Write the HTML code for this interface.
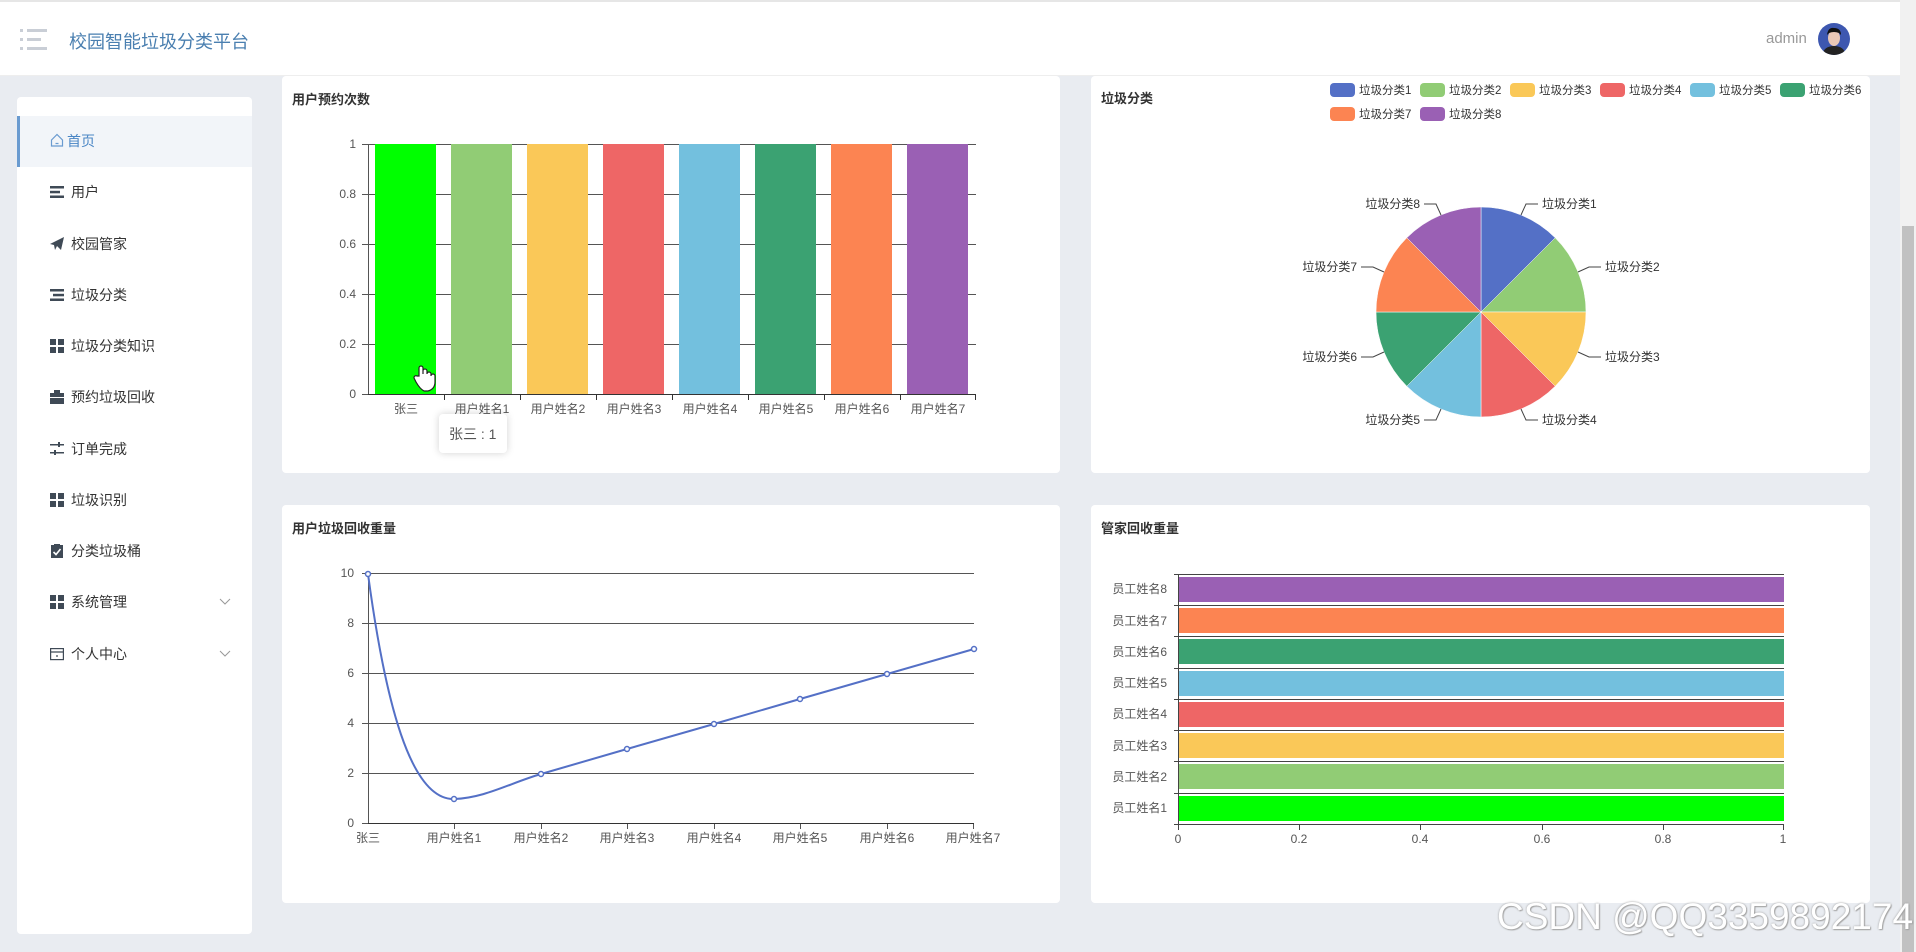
<!DOCTYPE html>
<html><head><meta charset="utf-8">
<style>
*{margin:0;padding:0;box-sizing:border-box}
body{width:1916px;height:952px;overflow:hidden;background:#e9ecf1;font-family:"Liberation Sans","Noto Sans CJK SC",sans-serif;position:relative}
.hdr{position:absolute;left:0;top:0;width:1900px;height:76px;background:#fff;border-top:2px solid #e6e6e6;border-bottom:1px solid #eee}
.title{position:absolute;left:69px;top:26px;font-size:18px;color:#4a7fb0}
.admin{position:absolute;left:1766px;top:28px;font-size:15px;color:#999}
.av{position:absolute;left:1818px;top:21px;width:32px;height:32px;border-radius:50%;background:#3d57b0;overflow:hidden}
.sb{position:absolute;left:1900px;top:0;width:16px;height:952px;background:#f1f1f1}
.thumb{position:absolute;left:1902px;top:226px;width:12px;height:726px;background:#c1c1c1}
.side{position:absolute;left:17px;top:97px;width:235px;height:837px;background:#fff;border-radius:4px}
.item{position:absolute;left:0;width:235px;height:51px;font-size:14px;color:#333}
.item .ic{position:absolute;left:33px;top:18px;width:14px;height:14px}
.item .tx{position:absolute;left:54px;top:15px}
.active{background:#f2f5f9;border-left:3px solid #6a9bd0}
.card{position:absolute;background:#fff;border-radius:4px}
.ct{position:absolute;left:10px;top:13px;font-size:13px;font-weight:bold;color:#333}
.tip{position:absolute;left:439px;top:414px;width:68px;height:39px;background:#fff;border-radius:4px;box-shadow:0 0 8px rgba(0,0,0,.18);font-size:14px;color:#555;padding:10px 0 0 10px}
.wm{position:absolute;left:1497px;top:896px;font-size:37px;color:#fff;text-shadow:0 0 2px #999,1px 1px 1px #aaa}
svg text{font-family:"Liberation Sans","Noto Sans CJK SC",sans-serif}
</style></head><body>
<div class="hdr">
<svg style="position:absolute;left:20px;top:26px" width="28" height="24"><g fill="#c9ced6"><rect x="0" y="1" width="3" height="3"/><rect x="7" y="1" width="20" height="3"/><rect x="0" y="10" width="3" height="3"/><rect x="7" y="10" width="14" height="3"/><rect x="0" y="19" width="3" height="3"/><rect x="7" y="19" width="20" height="3"/></g></svg>
<div class="title">校园智能垃圾分类平台</div>
<div class="admin">admin</div>
<div class="av"><svg width="32" height="32"><ellipse cx="16" cy="15" rx="6" ry="8" fill="#e9c7b6"/><path d="M9 12 Q10 4 16 5 Q23 5 23 12 L21 10 Q16 8 11 10Z" fill="#111"/><path d="M4 32 Q6 23 16 23 Q26 23 28 32Z" fill="#222"/></svg></div>
</div>
<div class="sb"></div><div class="thumb"></div>

<div class="side">
<div class="item active" style="top:19px"><svg class="ic" style="left:30px;top:17px" viewBox="0 0 14 14"><path d="M1.5 7 L7 1.5 L12.5 7 V13 H1.5Z M5.5 10.5 H8.5" fill="none" stroke="#6a9bd0" stroke-width="1.2"/></svg><span class="tx" style="left:47px;color:#4a86c5">首页</span></div>
<div class="item" style="top:70px"><svg class="ic" viewBox="0 0 14 14"><g fill="#3f4a56"><rect y="1" width="14" height="2.5"/><rect y="5.8" width="10" height="2.5"/><rect y="10.5" width="14" height="2.5"/></g></svg><span class="tx">用户</span></div>
<div class="item" style="top:122px"><svg class="ic" viewBox="0 0 14 14"><path d="M0 7 L14 0 L11 13 L7 9 L5 13 L4 8Z" fill="#3f4a56"/></svg><span class="tx">校园管家</span></div>
<div class="item" style="top:173px"><svg class="ic" viewBox="0 0 14 14"><g fill="#3f4a56"><rect y="1" width="14" height="2.5"/><rect x="3" y="5.8" width="11" height="2.5"/><rect y="10.5" width="14" height="2.5"/></g></svg><span class="tx">垃圾分类</span></div>
<div class="item" style="top:224px"><svg class="ic" viewBox="0 0 14 14"><g fill="#3f4a56"><rect width="6" height="6"/><rect x="8" width="6" height="6"/><rect y="8" width="6" height="6"/><rect x="8" y="8" width="6" height="6"/></g></svg><span class="tx">垃圾分类知识</span></div>
<div class="item" style="top:275px"><svg class="ic" viewBox="0 0 14 14"><g fill="#3f4a56"><rect x="4" y="0" width="6" height="3"/><rect y="3" width="14" height="4"/><rect y="8" width="14" height="6"/></g></svg><span class="tx">预约垃圾回收</span></div>
<div class="item" style="top:327px"><svg class="ic" viewBox="0 0 14 14"><g fill="#3f4a56"><rect y="2" width="14" height="1.5"/><rect x="8" y="0" width="2" height="5"/><rect y="10" width="14" height="1.5"/><rect x="4" y="8" width="2" height="5"/></g></svg><span class="tx">订单完成</span></div>
<div class="item" style="top:378px"><svg class="ic" viewBox="0 0 14 14"><g fill="#3f4a56"><rect width="6" height="6"/><rect x="8" width="6" height="6"/><rect y="8" width="6" height="6"/><rect x="8" y="8" width="6" height="6"/></g></svg><span class="tx">垃圾识别</span></div>
<div class="item" style="top:429px"><svg class="ic" viewBox="0 0 14 14"><rect x="1" y="1" width="12" height="13" fill="#3f4a56"/><rect x="4" y="0" width="6" height="3" fill="#3f4a56"/><path d="M3.5 8 L6 10.5 L10.5 5" stroke="#fff" stroke-width="1.6" fill="none"/></svg><span class="tx">分类垃圾桶</span></div>
<div class="item" style="top:480px"><svg class="ic" viewBox="0 0 14 14"><g fill="#3f4a56"><rect width="6" height="6"/><rect x="8" width="6" height="6"/><rect y="8" width="6" height="6"/><rect x="8" y="8" width="6" height="6"/></g></svg><span class="tx">系统管理</span><svg style="position:absolute;left:202px;top:21px" width="12" height="8"><path d="M1 1 L6 6 L11 1" stroke="#999" fill="none"/></svg></div>
<div class="item" style="top:532px"><svg class="ic" viewBox="0 0 14 14"><rect x="0.6" y="1.6" width="12.8" height="11" fill="none" stroke="#3f4a56" stroke-width="1.2"/><path d="M0.6 5 H13.4 M6 9 H8" stroke="#3f4a56" stroke-width="1.2"/></svg><span class="tx">个人中心</span><svg style="position:absolute;left:202px;top:21px" width="12" height="8"><path d="M1 1 L6 6 L11 1" stroke="#999" fill="none"/></svg></div>
</div>

<div class="card" style="left:282px;top:76px;width:778px;height:397px"><div class="ct">用户预约次数</div></div>
<div class="card" style="left:1091px;top:76px;width:779px;height:397px"><div class="ct" style="top:12px">垃圾分类</div></div>
<div class="card" style="left:282px;top:505px;width:778px;height:398px"><div class="ct">用户垃圾回收重量</div></div>
<div class="card" style="left:1091px;top:505px;width:779px;height:398px"><div class="ct">管家回收重量</div></div>

<svg style="position:absolute;left:0;top:0" width="1916" height="952">
<g stroke="#555" stroke-width="1">
<line x1="368" y1="144.5" x2="976" y2="144.5"/><line x1="368" y1="194.5" x2="976" y2="194.5"/><line x1="368" y1="244.5" x2="976" y2="244.5"/><line x1="368" y1="294.5" x2="976" y2="294.5"/><line x1="368" y1="344.5" x2="976" y2="344.5"/>
<line x1="362" y1="144.5" x2="368" y2="144.5"/><line x1="362" y1="194.5" x2="368" y2="194.5"/><line x1="362" y1="244.5" x2="368" y2="244.5"/><line x1="362" y1="294.5" x2="368" y2="294.5"/><line x1="362" y1="344.5" x2="368" y2="344.5"/><line x1="362" y1="394.5" x2="368" y2="394.5"/>
<line x1="368.5" y1="144" x2="368.5" y2="395"/>
</g>
<g>
<rect x="375" y="144" width="61" height="250" fill="#00ff00"/><rect x="451" y="144" width="61" height="250" fill="#91cc75"/><rect x="527" y="144" width="61" height="250" fill="#fac858"/><rect x="603" y="144" width="61" height="250" fill="#ee6666"/><rect x="679" y="144" width="61" height="250" fill="#73c0de"/><rect x="755" y="144" width="61" height="250" fill="#3ba272"/><rect x="831" y="144" width="61" height="250" fill="#fc8452"/><rect x="907" y="144" width="61" height="250" fill="#9a60b4"/>
</g>
<g stroke="#333"><line x1="368" y1="394.5" x2="976" y2="394.5"/><line x1="444.5" y1="395" x2="444.5" y2="400"/><line x1="520.5" y1="395" x2="520.5" y2="400"/><line x1="596.5" y1="395" x2="596.5" y2="400"/><line x1="672.5" y1="395" x2="672.5" y2="400"/><line x1="748.5" y1="395" x2="748.5" y2="400"/><line x1="824.5" y1="395" x2="824.5" y2="400"/><line x1="900.5" y1="395" x2="900.5" y2="400"/><line x1="975.5" y1="395" x2="975.5" y2="400"/></g>
<g font-size="12" fill="#555" text-anchor="end"><text x="356" y="148">1</text><text x="356" y="198">0.8</text><text x="356" y="248">0.6</text><text x="356" y="298">0.4</text><text x="356" y="348">0.2</text><text x="356" y="398">0</text></g>
<g font-size="12" fill="#555" text-anchor="middle"><text x="406" y="413">张三</text><text x="482" y="413">用户姓名1</text><text x="558" y="413">用户姓名2</text><text x="634" y="413">用户姓名3</text><text x="710" y="413">用户姓名4</text><text x="786" y="413">用户姓名5</text><text x="862" y="413">用户姓名6</text><text x="938" y="413">用户姓名7</text></g>
<path d="M419 376 v-8 a2 2 0 0 1 4 0 v6 v-3 a2 2 0 0 1 4 0 v3 a2 2 0 0 1 4 0 v2 a2 2 0 0 1 4 0 v6 q0 7 -7 9 h-4 q-4 -2 -8 -9 l-2 -4 a2 2 0 0 1 3 -2z" fill="#fff" stroke="#222" stroke-width="1.2"/>

<g stroke="#fff" stroke-width="0.5">
<path d="M1481 312 L1481 207 A105 105 0 0 1 1555.2 237.8Z" fill="#5470c6"/>
<path d="M1481 312 L1555.2 237.8 A105 105 0 0 1 1586 312Z" fill="#91cc75"/>
<path d="M1481 312 L1586 312 A105 105 0 0 1 1555.2 386.2Z" fill="#fac858"/>
<path d="M1481 312 L1555.2 386.2 A105 105 0 0 1 1481 417Z" fill="#ee6666"/>
<path d="M1481 312 L1481 417 A105 105 0 0 1 1406.8 386.2Z" fill="#73c0de"/>
<path d="M1481 312 L1406.8 386.2 A105 105 0 0 1 1376 312Z" fill="#3ba272"/>
<path d="M1481 312 L1376 312 A105 105 0 0 1 1406.8 237.8Z" fill="#fc8452"/>
<path d="M1481 312 L1406.8 237.8 A105 105 0 0 1 1481 207Z" fill="#9a60b4"/>
</g>
<g stroke="#444" fill="none" stroke-width="1">
<path d="M1521 215 L1526 204 H1538"/><path d="M1578 272 L1589 267 H1601"/><path d="M1578 352 L1589 357 H1601"/><path d="M1521 409 L1526 420 H1538"/>
<path d="M1441 409 L1436 420 H1424"/><path d="M1384 352 L1373 357 H1361"/><path d="M1384 272 L1373 267 H1361"/><path d="M1441 215 L1436 204 H1424"/>
</g>
<g font-size="12" fill="#333"><text x="1542" y="208">垃圾分类1</text><text x="1605" y="271">垃圾分类2</text><text x="1605" y="361">垃圾分类3</text><text x="1542" y="424">垃圾分类4</text></g>
<g font-size="12" fill="#333" text-anchor="end"><text x="1420" y="424">垃圾分类5</text><text x="1357" y="361">垃圾分类6</text><text x="1357" y="271">垃圾分类7</text><text x="1420" y="208">垃圾分类8</text></g>
<g font-size="11.5" fill="#333">
<rect x="1330" y="83" width="25" height="14" rx="4" fill="#5470c6"/><text x="1359" y="94">垃圾分类1</text>
<rect x="1420" y="83" width="25" height="14" rx="4" fill="#91cc75"/><text x="1449" y="94">垃圾分类2</text>
<rect x="1510" y="83" width="25" height="14" rx="4" fill="#fac858"/><text x="1539" y="94">垃圾分类3</text>
<rect x="1600" y="83" width="25" height="14" rx="4" fill="#ee6666"/><text x="1629" y="94">垃圾分类4</text>
<rect x="1690" y="83" width="25" height="14" rx="4" fill="#73c0de"/><text x="1719" y="94">垃圾分类5</text>
<rect x="1780" y="83" width="25" height="14" rx="4" fill="#3ba272"/><text x="1809" y="94">垃圾分类6</text>
<rect x="1330" y="107" width="25" height="14" rx="4" fill="#fc8452"/><text x="1359" y="118">垃圾分类7</text>
<rect x="1420" y="107" width="25" height="14" rx="4" fill="#9a60b4"/><text x="1449" y="118">垃圾分类8</text>
</g>

<g stroke="#555"><line x1="368" y1="573.5" x2="974" y2="573.5"/><line x1="368" y1="623.5" x2="974" y2="623.5"/><line x1="368" y1="673.5" x2="974" y2="673.5"/><line x1="368" y1="723.5" x2="974" y2="723.5"/><line x1="368" y1="773.5" x2="974" y2="773.5"/>
<line x1="362" y1="573.5" x2="368" y2="573.5"/><line x1="362" y1="623.5" x2="368" y2="623.5"/><line x1="362" y1="673.5" x2="368" y2="673.5"/><line x1="362" y1="723.5" x2="368" y2="723.5"/><line x1="362" y1="773.5" x2="368" y2="773.5"/><line x1="362" y1="823.5" x2="368" y2="823.5"/>
<line x1="368.5" y1="573" x2="368.5" y2="824"/><line x1="368" y1="823.5" x2="974" y2="823.5" stroke="#333"/>
<line x1="454.5" y1="824" x2="454.5" y2="829"/><line x1="541.5" y1="824" x2="541.5" y2="829"/><line x1="627.5" y1="824" x2="627.5" y2="829"/><line x1="714.5" y1="824" x2="714.5" y2="829"/><line x1="800.5" y1="824" x2="800.5" y2="829"/><line x1="887.5" y1="824" x2="887.5" y2="829"/><line x1="973.5" y1="824" x2="973.5" y2="829"/></g>
<g font-size="12" fill="#555" text-anchor="end"><text x="354" y="577">10</text><text x="354" y="627">8</text><text x="354" y="677">6</text><text x="354" y="727">4</text><text x="354" y="777">2</text><text x="354" y="827">0</text></g>
<g font-size="12" fill="#555" text-anchor="middle"><text x="368" y="842">张三</text><text x="454" y="842">用户姓名1</text><text x="541" y="842">用户姓名2</text><text x="627" y="842">用户姓名3</text><text x="714" y="842">用户姓名4</text><text x="800" y="842">用户姓名5</text><text x="887" y="842">用户姓名6</text><text x="973" y="842">用户姓名7</text></g>
<path d="M368 574 C385 700 410 800 454 799 C485 798 510 783 541 774 L627 749 L714 724 L800 699 L887 674 L974 649" fill="none" stroke="#5470c6" stroke-width="2"/>
<g fill="#fff" stroke="#5470c6" stroke-width="1.5"><circle cx="368" cy="574" r="2.5"/><circle cx="454" cy="799" r="2.5"/><circle cx="541" cy="774" r="2.5"/><circle cx="627" cy="749" r="2.5"/><circle cx="714" cy="724" r="2.5"/><circle cx="800" cy="699" r="2.5"/><circle cx="887" cy="674" r="2.5"/><circle cx="974" cy="649" r="2.5"/></g>

<g>
<rect x="1178" y="577" width="606" height="25" fill="#9a60b4"/>
<rect x="1178" y="608" width="606" height="25" fill="#fc8452"/>
<rect x="1178" y="639" width="606" height="25" fill="#3ba272"/>
<rect x="1178" y="671" width="606" height="25" fill="#73c0de"/>
<rect x="1178" y="702" width="606" height="25" fill="#ee6666"/>
<rect x="1178" y="733" width="606" height="25" fill="#fac858"/>
<rect x="1178" y="764" width="606" height="25" fill="#91cc75"/>
<rect x="1178" y="796" width="606" height="25" fill="#00ff00"/>
</g>
<g stroke="#444"><line x1="1174" y1="574.5" x2="1784" y2="574.5"/><line x1="1174" y1="605.5" x2="1784" y2="605.5"/><line x1="1174" y1="636.5" x2="1784" y2="636.5"/><line x1="1174" y1="668.5" x2="1784" y2="668.5"/><line x1="1174" y1="699.5" x2="1784" y2="699.5"/><line x1="1174" y1="730.5" x2="1784" y2="730.5"/><line x1="1174" y1="761.5" x2="1784" y2="761.5"/><line x1="1174" y1="793.5" x2="1784" y2="793.5"/><line x1="1174" y1="824.5" x2="1784" y2="824.5"/>
<line x1="1178.5" y1="574" x2="1178.5" y2="830"/><line x1="1299.5" y1="824" x2="1299.5" y2="830"/><line x1="1420.5" y1="824" x2="1420.5" y2="830"/><line x1="1542.5" y1="824" x2="1542.5" y2="830"/><line x1="1663.5" y1="824" x2="1663.5" y2="830"/><line x1="1783.5" y1="824" x2="1783.5" y2="830"/></g>
<g font-size="12" fill="#555" text-anchor="end"><text x="1167" y="593">员工姓名8</text><text x="1167" y="625">员工姓名7</text><text x="1167" y="656">员工姓名6</text><text x="1167" y="687">员工姓名5</text><text x="1167" y="718">员工姓名4</text><text x="1167" y="750">员工姓名3</text><text x="1167" y="781">员工姓名2</text><text x="1167" y="812">员工姓名1</text></g>
<g font-size="12" fill="#555" text-anchor="middle"><text x="1178" y="843">0</text><text x="1299" y="843">0.2</text><text x="1420" y="843">0.4</text><text x="1542" y="843">0.6</text><text x="1663" y="843">0.8</text><text x="1783" y="843">1</text></g>
</svg>
<div class="tip">张三 : 1</div>
<div class="wm">CSDN @QQ3359892174</div>
</body></html>
